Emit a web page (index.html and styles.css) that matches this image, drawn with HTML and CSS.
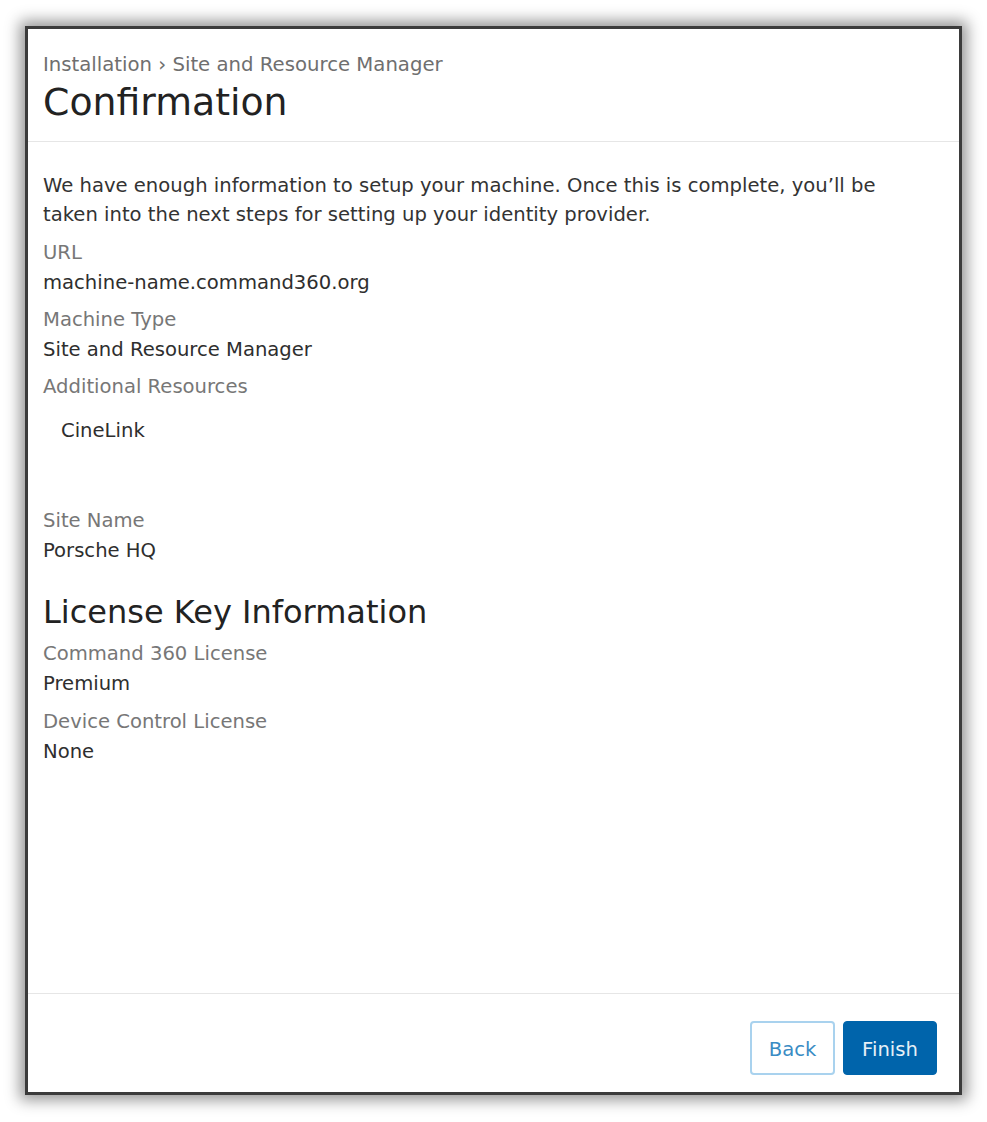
FILE: index.html
```html
<!DOCTYPE html>
<html lang="en">
<head>
<meta charset="utf-8">
<title>Confirmation</title>
<link rel="stylesheet" href="styles.css">
</head>
<body>
<div class="frame">
  <header class="head">
    <div class="crumb">Installation › Site and Resource Manager</div>
    <h1 class="title">Confirmation</h1>
  </header>
  <main class="content">
    <p class="intro">We have enough information to setup your machine. Once this is complete, you’ll be taken into the next steps for setting up your identity provider.</p>
    <div class="field">
      <div class="label">URL</div>
      <div class="value">machine-name.command360.org</div>
    </div>
    <div class="field">
      <div class="label">Machine Type</div>
      <div class="value">Site and Resource Manager</div>
    </div>
    <div class="field">
      <div class="label">Additional Resources</div>
      <ul class="res">
        <li>CineLink</li>
      </ul>
    </div>
    <div class="field site">
      <div class="label">Site Name</div>
      <div class="value">Porsche HQ</div>
    </div>
    <h2 class="section">License Key Information</h2>
    <div class="field">
      <div class="label">Command 360 License</div>
      <div class="value">Premium</div>
    </div>
    <div class="field last">
      <div class="label">Device Control License</div>
      <div class="value">None</div>
    </div>
  </main>
  <footer class="foot">
    <button class="btn btn-outline">Back</button>
    <button class="btn btn-primary">Finish</button>
  </footer>
</div>
</body>
</html>
```
FILE: styles.css
```css
* { box-sizing: border-box; }
html, body { margin: 0; padding: 0; background: #ffffff; }
body {
  font-family: "DejaVu Sans", "Liberation Sans", sans-serif;
  color: #313131;
  padding: 26px 0 27px 25px;
}
.frame {
  width: 937px;
  height: 1069px;
  border: 3px solid #3b3b3b;
  background: #fff;
  box-shadow: 0 0 14px 5px rgba(0, 0, 0, 0.42);
  display: flex;
  flex-direction: column;
}
.head {
  padding: 24px 15px 16px;
  border-bottom: 1px solid #e6e6e6;
}
.crumb {
  font-size: 19.7px;
  line-height: 24px;
  color: #6f6f6f;
}
.title {
  margin: 3px 0 0;
  font-size: 37.8px;
  line-height: 45px;
  font-weight: 400;
  color: #222222;
}
.content {
  flex: 1;
  padding: 29px 15px 0;
  font-size: 19.6px;
  line-height: 30px;
}
.intro {
  margin: 0 0 9px;
  max-width: 860px;
  line-height: 29px;
  color: #333333;
}
.field { margin-bottom: 7px; }
.field.last { margin-top: 8px; }
.label { color: #777777; }
.value { color: #2e2e2e; }
.res {
  list-style: none;
  margin: 14px 0 0;
  padding: 0 0 0 18px;
  color: #2e2e2e;
}
.field.site { margin-top: 60px; }
.section {
  margin: 28px 0 9px;
  font-size: 32px;
  line-height: 36px;
  font-weight: 400;
  color: #222222;
}
.foot {
  border-top: 1px solid #e6e6e6;
  padding: 27px 22px 17px 0;
  display: flex;
  justify-content: flex-end;
  gap: 8px;
}
.btn {
  height: 54px;
  border-radius: 4px;
  font-family: inherit;
  font-size: 19.6px;
  padding: 2px 0 0;
  cursor: pointer;
}
.btn-outline {
  width: 85px;
  background: #fff;
  border: 2px solid #a9d2ee;
  color: #3a8cc4;
}
.btn-primary {
  width: 94px;
  background: #0064ab;
  border: 1px solid #0064ab;
  color: #e6f0f7;
}
```
